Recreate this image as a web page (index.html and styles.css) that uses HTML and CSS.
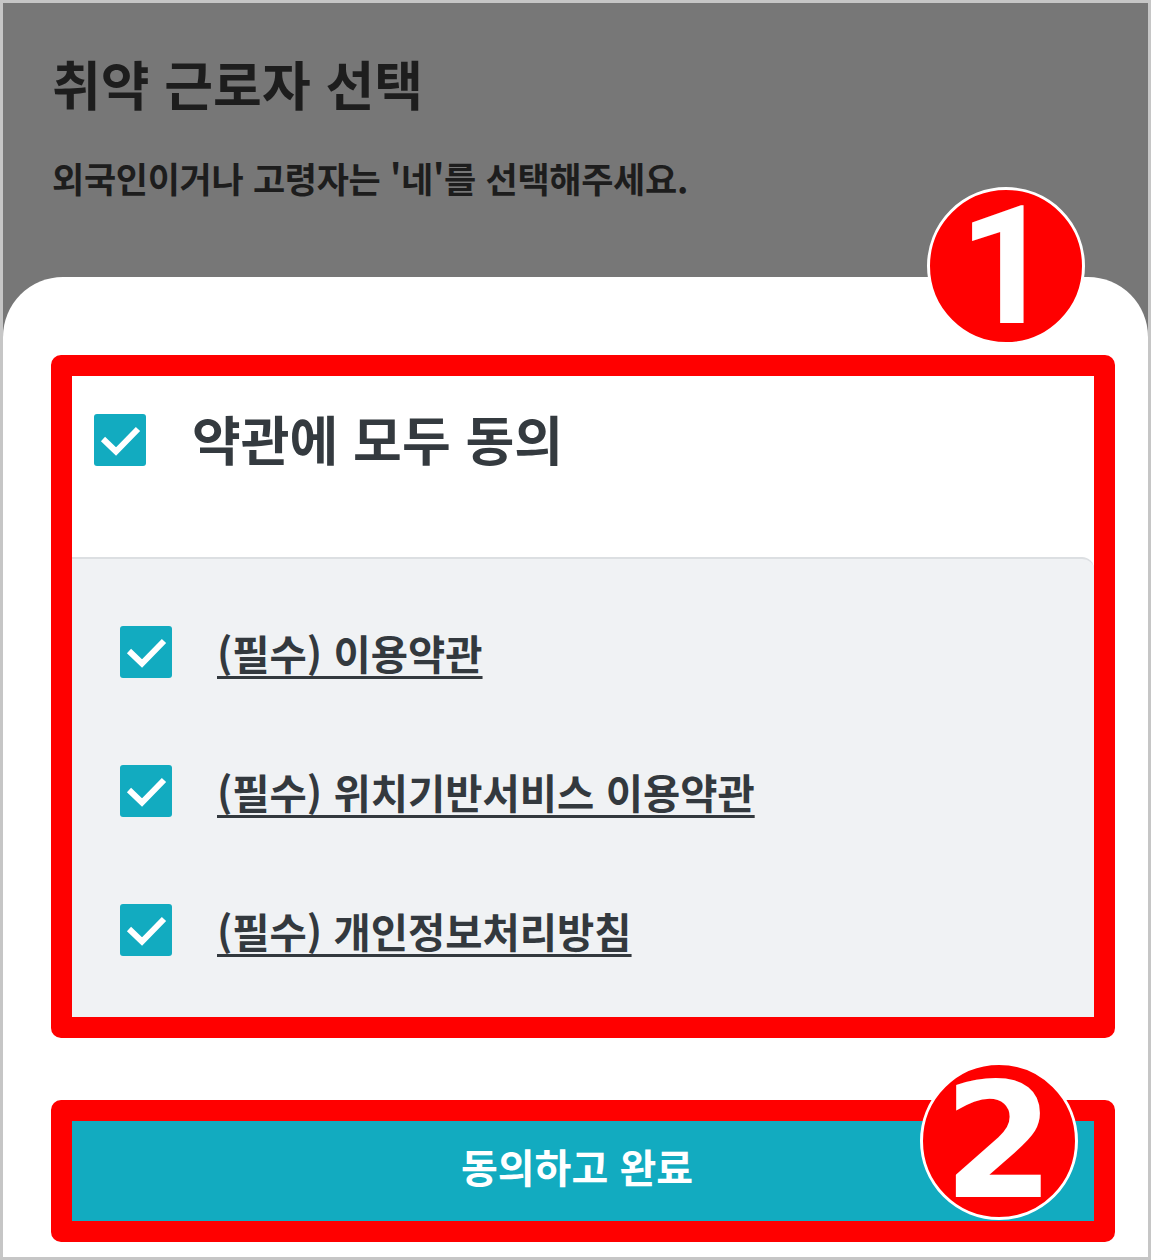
FILE: index.html
```html
<!DOCTYPE html>
<html lang="ko">
<head>
<meta charset="UTF-8">
<meta name="viewport" content="width=device-width, initial-scale=1.0">
<link rel="stylesheet" href="styles.css">
</head>
<body>

<div class="frame">
  <div class="backdrop">
    <h1 class="title">취약 근로자 선택</h1>
    <p class="desc">외국인이거나 고령자는 '네'를 선택해주세요.</p>
  </div>

  <div class="sheet">
    <div class="mark mark-terms">
      <div class="all-row">
        <svg class="check check-lg" viewBox="0 0 52 52"><rect width="52" height="52" rx="3"/><path d="M9 25 L22 37.5 L44 15"/></svg>
        <span class="all-label">약관에 모두 동의</span>
      </div>
      <div class="terms">
        <div class="term">
          <svg class="check" viewBox="0 0 52 52"><rect width="52" height="52" rx="3"/><path d="M9 25 L22 37.5 L44 15"/></svg>
          <a class="term-link">(필수) 이용약관</a>
        </div>
        <div class="term">
          <svg class="check" viewBox="0 0 52 52"><rect width="52" height="52" rx="3"/><path d="M9 25 L22 37.5 L44 15"/></svg>
          <a class="term-link">(필수) 위치기반서비스 이용약관</a>
        </div>
        <div class="term">
          <svg class="check" viewBox="0 0 52 52"><rect width="52" height="52" rx="3"/><path d="M9 25 L22 37.5 L44 15"/></svg>
          <a class="term-link">(필수) 개인정보처리방침</a>
        </div>
      </div>
    </div>

    <div class="mark mark-submit">
      <button class="submit">동의하고 완료</button>
    </div>
  </div>

  <div class="step step-1">1</div>
  <div class="step step-2">2</div>
</div>

</body>
</html>
```

FILE: styles.css
```css
body {
  margin: 0;
  background: #fff;
  font-family: "Noto Sans CJK KR", "Noto Sans", sans-serif;
}
.frame {
  position: relative;
  width: 1151px;
  height: 1260px;
  box-sizing: border-box;
  border: 3px solid #c6c6c6;
  background: #777777;
  display: flex;
  flex-direction: column;
  overflow: hidden;
}
.backdrop {
  height: 274px;
  padding: 0 0 0 49px;
  box-sizing: border-box;
  color: #1d1d1d;
}
.title {
  margin: 0;
  padding-top: 44px;
  font-size: 53px;
  font-weight: 700;
  line-height: 72px;
}
.desc {
  margin: 37px 0 0;
  font-size: 35px;
  font-weight: 700;
  line-height: 44px;
  letter-spacing: -0.3px;
}
.sheet {
  flex: 1;
  background: #fff;
  border-radius: 60px 60px 0 0;
  padding: 78px 33px 0 48px;
}

/* red highlight boxes */
.mark {
  border: 21px solid #ff0000;
  border-radius: 10px;
  overflow: hidden;
}
.mark-terms {
  height: 683px;
  box-sizing: border-box;
  display: flex;
  flex-direction: column;
}
.mark-submit {
  margin-top: 62px;
  height: 142px;
  box-sizing: border-box;
}

.check {
  flex: none;
  width: 52px;
  height: 52px;
}
.check rect {
  fill: #12abc0;
}
.check path {
  fill: none;
  stroke: #fff;
  stroke-width: 6;
}

.all-row {
  height: 181px;
  box-sizing: border-box;
  padding: 38px 0 0 22px;
  display: flex;
  align-items: flex-start;
  gap: 46px;
  background: #fff;
}
.all-label {
  font-size: 53px;
  font-weight: 700;
  line-height: 48px;
  color: #343a3f;
}

.terms {
  flex: 1;
  background: #f0f2f4;
  border-top: 2px solid #dcdfe2;
  border-top-right-radius: 12px;
  padding: 67px 0 0 48px;
  display: flex;
  flex-direction: column;
  gap: 87px;
}
.term {
  display: flex;
  align-items: center;
  gap: 45px;
  height: 52px;
}
.term-link {
  font-size: 40.5px;
  font-weight: 700;
  color: #33393e;
  text-decoration: underline;
  text-decoration-thickness: 3px;
  text-underline-offset: 6px;
}

.submit {
  display: block;
  width: 100%;
  height: 100%;
  border: none;
  padding: 0 12px 10px 0;
  background: #12abc0;
  color: #fff;
  font-family: inherit;
  font-size: 40px;
  font-weight: 700;
}

/* numbered callouts */
.step {
  position: absolute;
  width: 152px;
  height: 152px;
  border: 3px solid #fff;
  border-radius: 50%;
  background: #ff0000;
  color: #fff;
  display: flex;
  align-items: center;
  justify-content: center;
  font-weight: 700;
}
.step-1 {
  left: 924px;
  top: 184px;
  font-family: Roboto, sans-serif;
  font-size: 166px;
}
.step-2 {
  left: 917px;
  top: 1059px;
  font-family: "DejaVu Sans", sans-serif;
  font-size: 160px;
}
```
